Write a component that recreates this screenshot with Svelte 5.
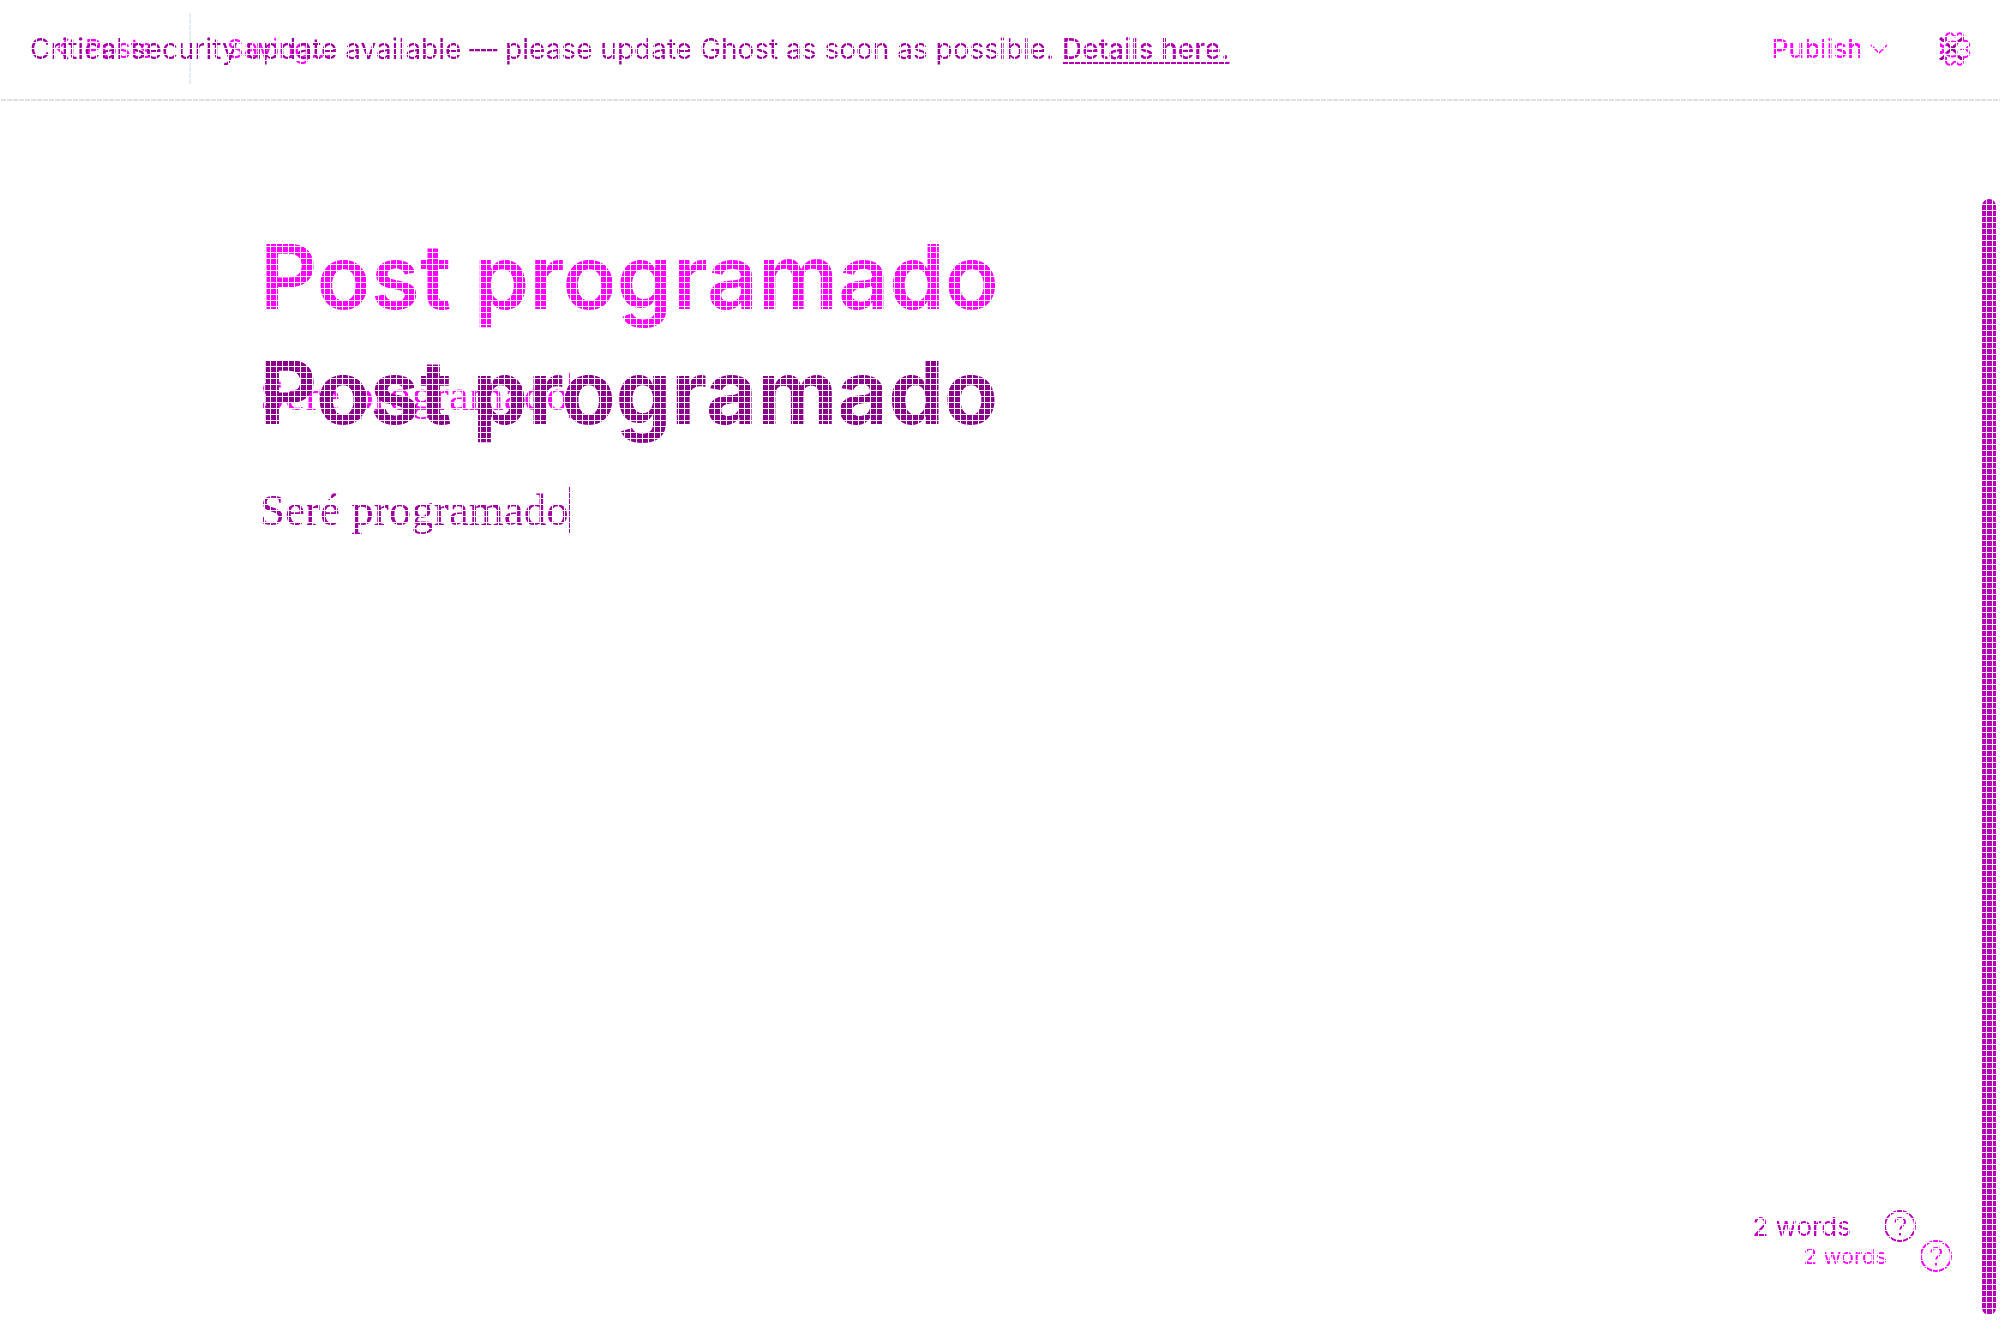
<script>
  const title = 'Post programado';
  const body = 'Seré programado';
  const count = '2 words';
</script>

{#snippet help()}
  <svg class="help-icon" viewBox="0 0 32 32" aria-hidden="true">
    <circle cx="16" cy="16" r="15" />
    <path d="M11.5 12.5c0-3 2-4.500 4.800-4.500s4.700 1.700 4.700 4.200c0 3.300-4.800 3.700-4.800 7.300M16 23v2.500" />
  </svg>
{/snippet}

<div class="stage">
  <div class="layer before">
    <header class="bar">
      <nav class="crumbs">
        <a class="back" href="#posts">
          <svg class="chev-left" viewBox="0 0 14 24" aria-hidden="true"><path d="M12 2 2 12l10 10" /></svg>
          Posts
        </a>
        <span class="status">Saving...</span>
      </nav>
      <div class="actions">
        <button class="publish">
          Publish
          <svg class="chev-down" viewBox="0 0 18 10" aria-hidden="true"><path d="M1 1l8 8 8-8" /></svg>
        </button>
        <button class="gear" aria-label="Settings">
          <svg viewBox="0 0 32 34" aria-hidden="true">
            <path d="M7 9V5c0-4 5-5 7-2 1 2 3 2 4 0 2-3 6-2 6 2v4M7 25v4c0 4 5 5 7 2 1-2 3-2 4 0 2 3 6 2 6-2v-4M24 9c5-1 8 3 5 6-2 1-2 3 0 4 3 3 0 7-5 6M1 12c4 1 4 9 0 10" />
            <path d="M7 14c1-5 9-6 12-2M7 20c1 5 9 6 12 2M1 14h5M1 20h5M21 17h4" />
            <path class="deep" d="M1 6l5 4M1 28l5-4M24 6l-5 4M24 28l-5-4M8 12l10 9M18 12L8 21" />
          </svg>
        </button>
      </div>
    </header>
    <main class="post">
      <h1>{title}</h1>
      <p>{body}<span class="caret"></span></p>
    </main>
    <footer><span>{count}</span><button aria-label="Help">{@render help()}</button></footer>
  </div>

  <div class="layer after">
    <header class="bar">
      <p class="notice">Critical security update available — please update Ghost as soon as possible. <a href="#details">Details here.</a></p>
    </header>
    <main class="post">
      <h1>{title}</h1>
      <p>{body}<span class="caret"></span></p>
    </main>
    <footer><span>{count}</span><button aria-label="Help">{@render help()}</button></footer>
  </div>

  <div class="rail"><div class="thumb"></div></div>
  <div class="mesh"></div>
</div>

<style>
  :global(body) { background: #fff; }
  .stage {
    display: grid;
    min-height: 100vh;
    font-family: Inter, "Liberation Sans", sans-serif;
    overflow: hidden;
  }
  .layer, .rail, .mesh { grid-area: 1 / 1; min-width: 0; }
  .layer { display: flex; flex-direction: column; }
  .before { color: #f0f; }
  .after { color: #a000a0; mix-blend-mode: multiply; pointer-events: none; }
  .after a, .after button { pointer-events: auto; }
  .bar {
    box-sizing: border-box;
    height: 101px;
    display: flex;
    align-items: center;
    justify-content: space-between;
    border-bottom: 2px solid transparent;
  }
  .before .bar { border-color: #dfdfdf; padding: 0 29px 2px 56px; }
  .after .bar { padding: 0 30px 2px; }
  .crumbs { display: flex; align-items: center; font-size: 26px; }
  .back {
    display: flex; align-items: center; gap: 15px;
    box-sizing: border-box; width: 135px; height: 72px;
    border-right: 2px solid #e4ecf2;
    color: inherit; text-decoration: none;
  }
  .status { margin-left: 36px; }
  .notice { margin: 0; font-size: 28px; font-weight: 400; line-height: 36px; white-space: nowrap; }
  .notice a { color: #b000b0; font-weight: 500; text-decoration-thickness: 2px; text-underline-offset: 3px; }
  .actions { display: flex; align-items: center; gap: 51px; }
  button { padding: 0; border: 0; background: none; color: inherit; font: inherit; cursor: pointer; }
  .publish { display: flex; align-items: center; gap: 7px; font-size: 26px; font-weight: 500; }
  svg { display: block; fill: none; stroke: currentColor; stroke-width: 2; }
  .chev-left { width: 14px; height: 24px; }
  .chev-down { width: 18px; height: 10px; stroke-width: 1.5; }
  .gear svg { width: 32px; height: 34px; }
  .gear .deep { stroke: #a000a0; stroke-width: 3; }
  .post { padding: 0 260px; }
  .before .post { padding-top: 122px; }
  .after .post { padding-top: 237px; }
  h1 { margin: 0; font-size: 89px; line-height: 108px; font-weight: 600; white-space: nowrap; }
  .after h1 { color: #8b008b; font-size: 88px; font-weight: 700; }
  .post p {
    display: flex; align-items: center;
    margin: 36px 0 0;
    font-family: "Liberation Serif", serif; font-size: 45px; line-height: 56px;
  }
  .caret { width: 2px; height: 46px; background: currentColor; }
  footer { margin-top: auto; display: flex; align-items: center; justify-content: flex-end; }
  .before footer { gap: 33px; padding: 0 48px 48px; font-size: 22px; }
  .after footer { gap: 33px; padding: 0 84px 78px; font-size: 26px; color: #c000c0; }
  .help-icon { width: 32px; height: 32px; }
  .rail { display: flex; justify-content: flex-end; padding: 199px 4px 5px 0; pointer-events: none; }
  .thumb { width: 14px; border-radius: 7px; background: #b900b9; }
  .mesh {
    z-index: 1;
    pointer-events: none;
    background:
      repeating-linear-gradient(90deg, #fff 0 1px, transparent 1px 6px),
      repeating-linear-gradient(180deg, #fff 0 1px, transparent 1px 6px);
  }
</style>
